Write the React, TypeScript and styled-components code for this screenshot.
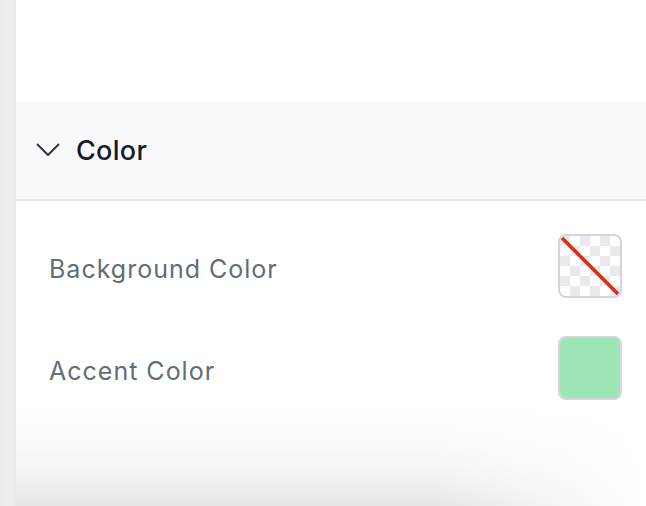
import React from "react";
import styled, { createGlobalStyle } from "styled-components";

const Global = createGlobalStyle`
  html, body { margin: 0; padding: 0; background: #ffffff; }
  body { font-family: Inter, "Noto Sans", "Liberation Sans", sans-serif; overflow: hidden; }
  #root { width: 646px; height: 506px; }
`;

const Page = styled.div`
  position: relative;
  display: flex;
  width: 646px;
  height: 506px;
  overflow: hidden;
  background: #ffffff;
`;

const SideStrip = styled.div`
  width: 16px;
  flex: none;
  background: linear-gradient(90deg, #ebebed 0%, #eeeef0 80%, #e6e7ea 100%);
`;

const Panel = styled.div`
  flex: 1;
  display: flex;
  flex-direction: column;
  padding-top: 101px;
`;

const SectionHeader = styled.div`
  height: 98px;
  display: flex;
  align-items: center;
  gap: 16px;
  padding-left: 20px;
  background: #f8f9fb;
  border-bottom: 2px solid #e6e8ec;
`;

const HeaderTitle = styled.span`
  font-size: 27px;
  font-weight: 500;
  color: #151b2b;
  letter-spacing: 0.3px;
`;

const Rows = styled.div`
  display: flex;
  flex-direction: column;
  gap: 38px;
  padding: 33px 24px 0 33px;
`;

const Row = styled.div`
  height: 64px;
  display: flex;
  align-items: center;
  justify-content: space-between;
`;

const Label = styled.span`
  font-size: 25px;
  color: #5f6e77;
  letter-spacing: 1px;
  padding-top: 5px;
`;

const Swatch = styled.div<{ $fill?: string }>`
  position: relative;
  width: 64px;
  height: 64px;
  box-sizing: border-box;
  border: 2px solid #d3d6dc;
  border-radius: 8px;
  overflow: hidden;
  background: ${(p) =>
    p.$fill
      ? p.$fill
      : `repeating-conic-gradient(#ffffff 0% 25%, #e9eaee 0% 50%) 0 0 / 20px 20px`};
`;

const Slash = styled.svg`
  position: absolute;
  inset: 0;
`;

const BottomShade = styled.div`
  position: absolute;
  left: 16px;
  right: 0;
  bottom: 0;
  height: 100px;
  pointer-events: none;
  background: linear-gradient(
    180deg,
    rgba(0, 0, 0, 0) 0%,
    rgba(0, 0, 0, 0.015) 30%,
    rgba(0, 0, 0, 0.04) 60%,
    rgba(0, 0, 0, 0.075) 85%,
    rgba(0, 0, 0, 0.1) 100%
  );
  -webkit-mask-image: linear-gradient(90deg, #000 0%, #000 65%, transparent 100%);
  mask-image: linear-gradient(90deg, #000 0%, #000 65%, transparent 100%);
`;

const Chevron = () => (
  <svg width="24" height="14" viewBox="0 0 24 14" fill="none">
    <path d="M1.5 1.5 L12 12 L22.5 1.5" stroke="#2f3a4a" strokeWidth="2" strokeLinecap="round" strokeLinejoin="round" />
  </svg>
);

export default function App() {
  return (
    <Page>
      <Global />
      <SideStrip />
      <Panel>
        <SectionHeader>
          <Chevron />
          <HeaderTitle>Color</HeaderTitle>
        </SectionHeader>
        <Rows>
          <Row>
            <Label>Background Color</Label>
            <Swatch>
              <Slash width="60" height="60" viewBox="0 0 60 60">
                <line x1="2" y1="2" x2="58" y2="58" stroke="#dc2a1c" strokeWidth="3.5" />
              </Slash>
            </Swatch>
          </Row>
          <Row>
            <Label>Accent Color</Label>
            <Swatch $fill="#9ee6b6" />
          </Row>
        </Rows>
      </Panel>
      <BottomShade />
    </Page>
  );
}
